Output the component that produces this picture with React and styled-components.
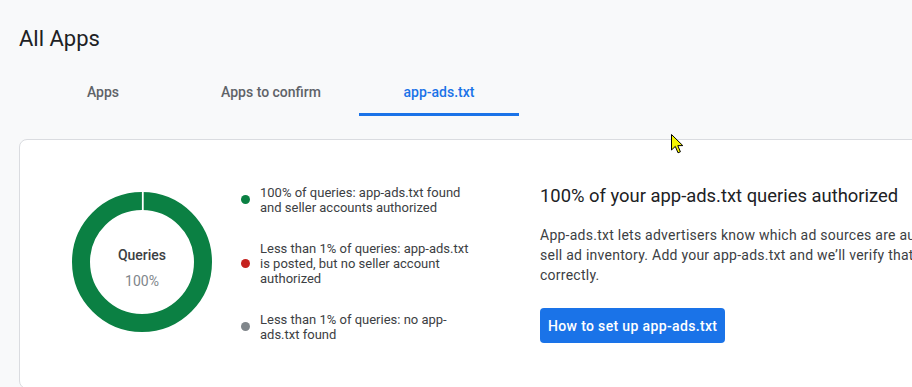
import styled, { createGlobalStyle } from 'styled-components';

const GlobalStyle = createGlobalStyle`
	html, body {
		margin: 0;
		padding: 0;
		overflow: hidden;
		background: #f8f9fa;
		font-family: Roboto, "Liberation Sans", Arial, sans-serif;
	}
`;

const Page = styled.div`
	position: relative;
	width: 1200px;
	min-height: 387px;
	padding: 25px 0 0 19px;
	box-sizing: border-box;
`;

const Title = styled.h1`
	margin: 0;
	font-size: 22px;
	line-height: 28px;
	font-weight: 400;
	color: #202124;
`;

const TabList = styled.div`
	display: flex;
	gap: 8px;
	padding: 0 4px;
	margin-top: 15px;
`;

const Tab = styled.div`
	width: 160px;
	height: 48px;
	box-sizing: border-box;
	display: flex;
	align-items: center;
	justify-content: center;
	font-size: 14px;
	font-weight: 500;
	color: ${(p) => (p.$active ? '#1a73e8' : '#5f6368')};
	border-bottom: 3px solid ${(p) => (p.$active ? '#1a73e8' : 'transparent')};
	padding-top: 3px;
`;

const Card = styled.div`
	margin-top: 23px;
	width: 1100px;
	height: 250px;
	box-sizing: border-box;
	background: #fff;
	border: 1px solid #dadce0;
	border-radius: 8px;
	display: flex;
	align-items: center;
	padding: 0 0 4px 52px;
`;

const Donut = styled.div`
	display: grid;
	width: 140px;
	height: 140px;
	& > * {
		grid-area: 1 / 1;
	}
`;

const DonutLabel = styled.div`
	display: flex;
	flex-direction: column;
	align-items: center;
	justify-content: center;
	padding-top: 11px;
	font-size: 14px;
	line-height: 20px;
`;

const LabelTitle = styled.span`
	font-weight: 500;
	color: #3c4043;
	margin-bottom: 6px;
`;

const LabelValue = styled.span`
	color: #80868b;
`;

const Legend = styled.div`
	display: flex;
	flex-direction: column;
	gap: 26px;
	margin-left: 29px;
	padding-top: 2px;
`;

const LegendItem = styled.div`
	display: flex;
	align-items: center;
	gap: 10px;
`;

const Dot = styled.span`
	flex: none;
	width: 9px;
	height: 9px;
	border-radius: 50%;
	background: ${(p) => p.$color};
`;

const LegendText = styled.span`
	width: 212px;
	font-size: 13px;
	line-height: 15px;
	color: #3c4043;
`;

const Info = styled.div`
	display: flex;
	flex-direction: column;
	align-items: flex-start;
	margin: 3px 0 0 68px;
`;

const Heading = styled.h2`
	margin: 0;
	font-size: 18.4px;
	line-height: 24px;
	font-weight: 400;
	color: #202124;
`;

const Body = styled.p`
	margin: 17px 0 0;
	width: 452px;
	font-size: 14px;
	line-height: 20px;
	letter-spacing: 0.25px;
	color: #3c4043;
`;

const Button = styled.button`
	margin-top: 23px;
	height: 35px;
	padding: 0 8px;
	border: 0;
	border-radius: 4px;
	background: #1a73e8;
	color: #fff;
	font-family: inherit;
	font-size: 14px;
	font-weight: 500;
	letter-spacing: 0.35px;
	cursor: pointer;
`;

const Cursor = styled.svg`
	position: absolute;
	left: 671px;
	top: 134px;
`;

const legend = [
	{ color: '#0b8043', text: '100% of queries: app-ads.txt found and seller accounts authorized' },
	{ color: '#c5221f', text: 'Less than 1% of queries: app-ads.txt is posted, but no seller account authorized' },
	{ color: '#80868b', text: 'Less than 1% of queries: no app-ads.txt found' },
];

const App = () => {
	return (
		<Page>
			<GlobalStyle />
			<Title>All Apps</Title>
			<TabList>
				<Tab>Apps</Tab>
				<Tab>Apps to confirm</Tab>
				<Tab $active>app-ads.txt</Tab>
			</TabList>
			<Card>
				<Donut>
					<svg width="140" height="140" viewBox="0 0 140 140">
						<circle cx="70" cy="70" r="61" fill="none" stroke="#0b8043" strokeWidth="18" />
						<line x1="70.8" y1="0" x2="70.8" y2="19" stroke="#fff" strokeWidth="1.8" />
					</svg>
					<DonutLabel>
						<LabelTitle>Queries</LabelTitle>
						<LabelValue>100%</LabelValue>
					</DonutLabel>
				</Donut>
				<Legend>
					{legend.map((item) => (
						<LegendItem key={item.text}>
							<Dot $color={item.color} />
							<LegendText>{item.text}</LegendText>
						</LegendItem>
					))}
				</Legend>
				<Info>
					<Heading>100% of your app-ads.txt queries authorized</Heading>
					<Body>
						App-ads.txt lets advertisers know which ad sources are authorized to sell ad inventory. Add your
						app-ads.txt and we’ll verify that it’s set up correctly.
					</Body>
					<Button>How to set up app-ads.txt</Button>
				</Info>
			</Card>
			<Cursor width="13" height="20" viewBox="0 0 13 20">
				<path d="M0.5 0.5 L0.5 16 L4.3 12.4 L7 18.8 L9.4 17.8 L6.8 11.6 L11.8 11.6 Z" fill="#f5f500" stroke="#000" strokeWidth="1" strokeLinejoin="round" />
			</Cursor>
		</Page>
	);
};

export default App;
